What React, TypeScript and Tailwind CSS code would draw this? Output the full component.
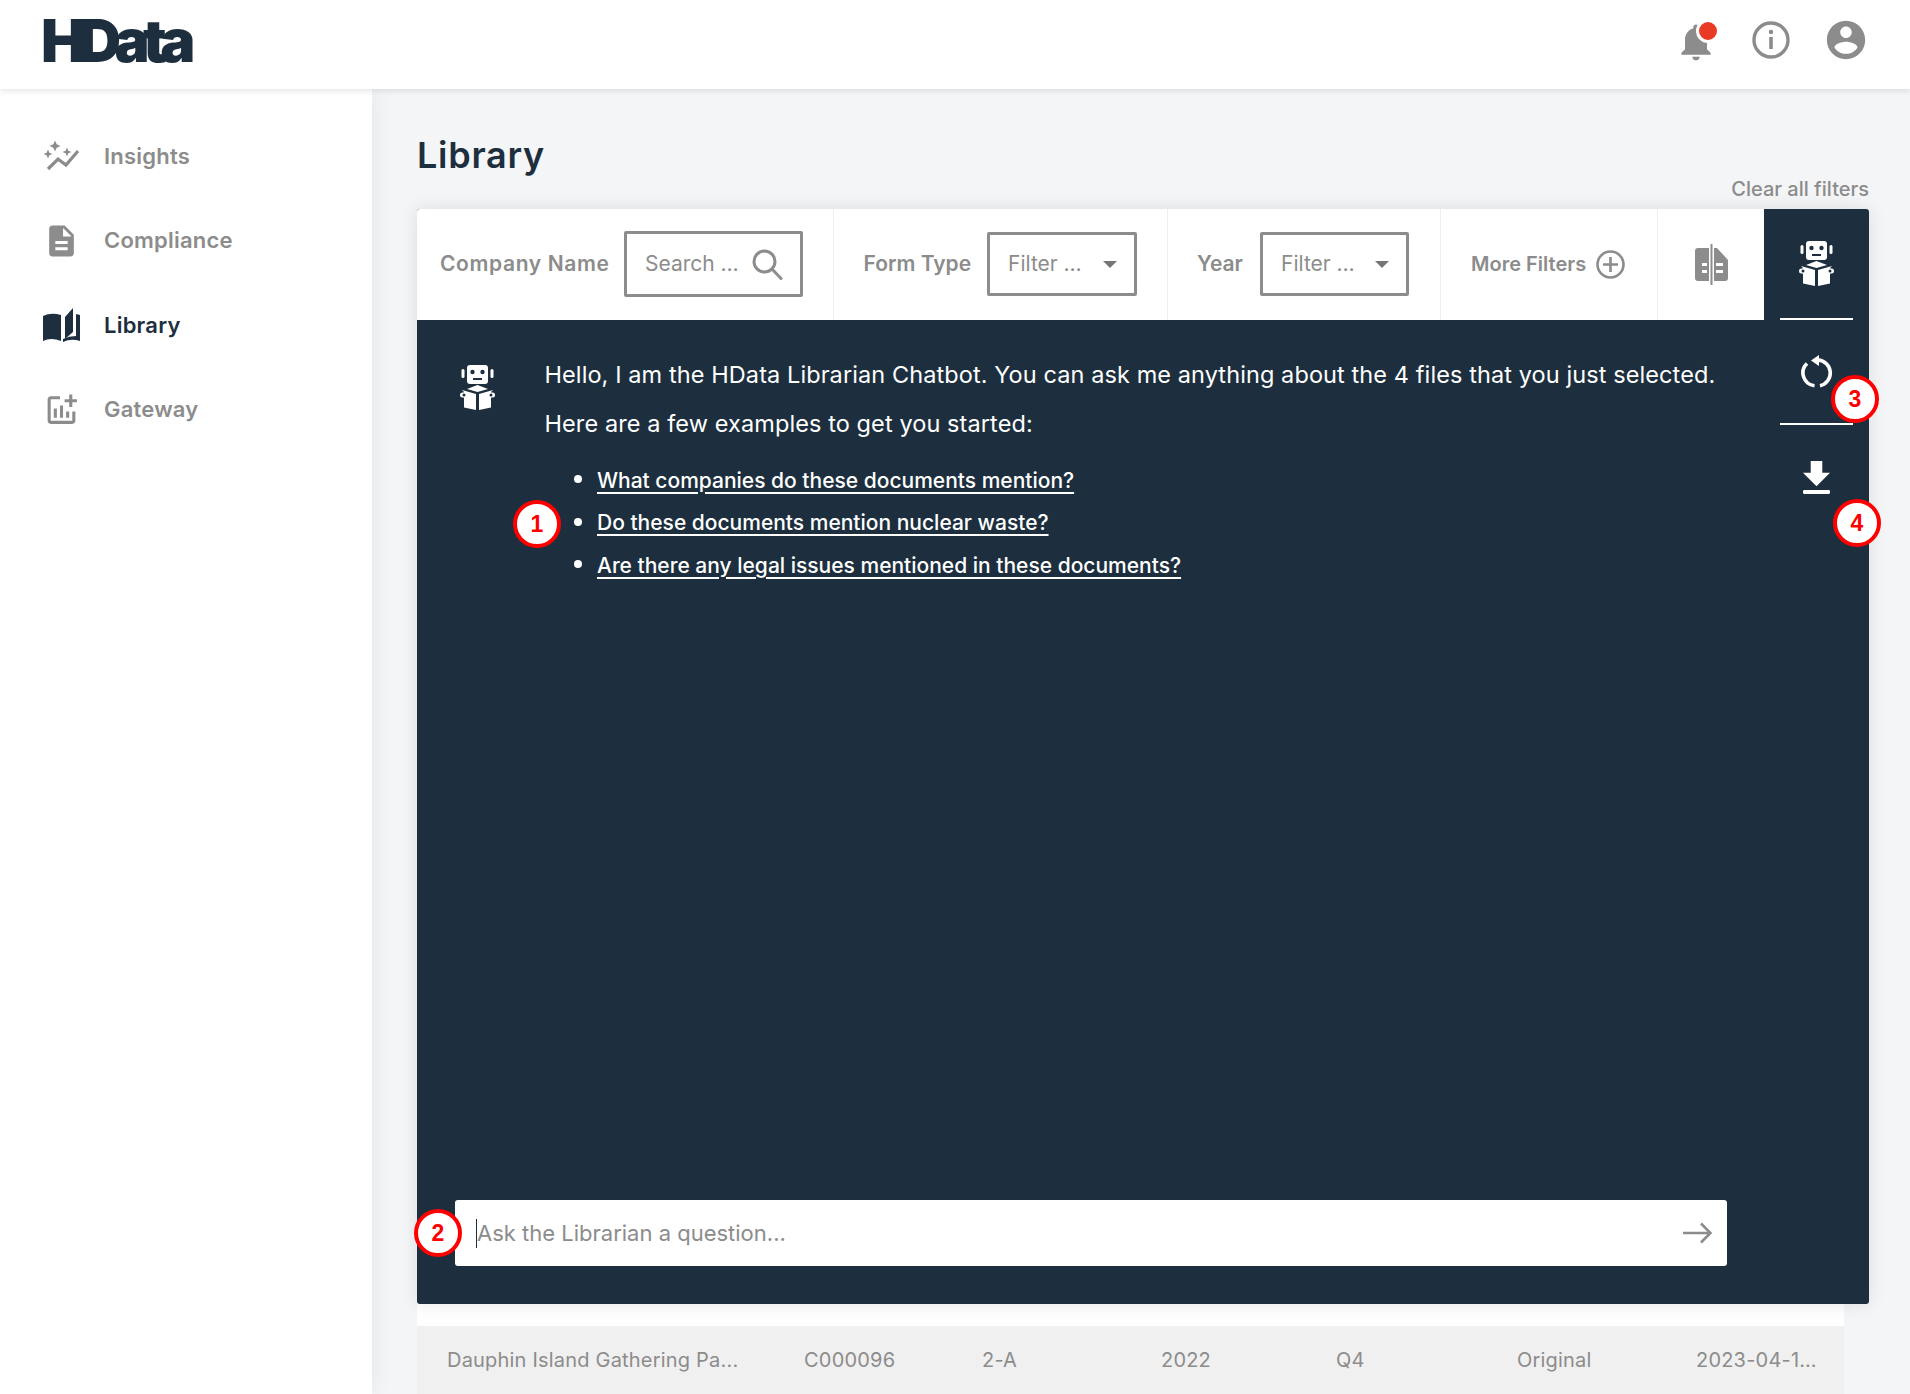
const font = { fontFamily: 'Inter, "Noto Sans", sans-serif' }

function Sparkle({ x, y, r }: { x: number; y: number; r: number }) {
  const k = r * 0.3
  return <path d={`M${x} ${y - r}L${x + k} ${y - k}L${x + r} ${y}L${x + k} ${y + k}L${x} ${y + r}L${x - k} ${y + k}L${x - r} ${y}L${x - k} ${y - k}Z`} />
}

function InsightsIcon() {
  return (
    <svg width="36" height="30" viewBox="0 0 36 30" fill="#8c8c8c">
      <Sparkle x={11} y={5} r={5.5} />
      <Sparkle x={23} y={11} r={4.5} />
      <Sparkle x={4} y={13} r={4.5} />
      <path d="M4 28l10-10 8 6 12-14" fill="none" stroke="#8c8c8c" strokeWidth="3.2" />
    </svg>
  )
}

function ComplianceIcon() {
  return (
    <svg width="44" height="44" viewBox="0 0 24 24" fill="#8c8c8c">
      <path d="M14 2H6c-1.1 0-1.99.9-1.99 2L4 20c0 1.1.89 2 1.99 2H18c1.1 0 2-.9 2-2V8l-6-6zm2 16H8v-2h8v2zm0-4H8v-2h8v2zm-3-5V3.5L18.5 9H13z" />
    </svg>
  )
}

function LibraryIcon() {
  return (
    <svg width="37" height="35" viewBox="0 0 37 35" fill="#1d2f3e">
      <path d="M0 8Q8 4 18 7V33Q8 29 0 33Z" />
      <path d="M22 9L30 0V24L22 31Z" />
      <path d="M20 34Q28 30 37 33V7L33 6V28Q26 28 20 31Z" />
    </svg>
  )
}

function GatewayIcon() {
  return (
    <svg width="38" height="38" viewBox="0 0 24 24" fill="#8c8c8c">
      <path d="M22 5v2h-3v3h-2V7h-3V5h3V2h2v3h3zm-3 14H5V5h6V3H5c-1.1 0-2 .9-2 2v14c0 1.1.9 2 2 2h14c1.1 0 2-.9 2-2v-6h-2v6zm-4-6v4h2v-4h-2zm-4 4h2V9h-2v8zm-2 0v-6H7v6h2z" />
    </svg>
  )
}

function RobotIcon() {
  return (
    <svg width="35" height="45" viewBox="0 0 35 45" fill="#fff">
      <rect x="7" y="0" width="21" height="19" rx="3" />
      <rect x="1.5" y="4" width="3" height="9" rx="1.5" />
      <rect x="30.5" y="4" width="3" height="9" rx="1.5" />
      <circle cx="12.5" cy="7" r="2.2" fill="#1d2f3e" />
      <circle cx="22.5" cy="7" r="2.2" fill="#1d2f3e" />
      <rect x="13" y="13" width="9" height="2" fill="#1d2f3e" />
      <path d="M7 24L17.5 20L28 24L17.5 27Z" />
      <path d="M2 25L16 29V45L4 42.5V33A3.5 3.5 0 0 1 4 27Z" />
      <path d="M33 25L19 29V45L31 42.5V33A3.5 3.5 0 0 0 31 27Z" />
      <circle cx="2.5" cy="30" r="2.5" />
      <circle cx="32.5" cy="30" r="2.5" />
      <circle cx="31" cy="30" r="1.5" fill="#1d2f3e" />
      <circle cx="4" cy="30" r="1.5" fill="#1d2f3e" />
    </svg>
  )
}

function Caret() {
  return (
    <svg width="14" height="7" viewBox="0 0 14 7" fill="#757575">
      <path d="M0 0h14L7 7z" />
    </svg>
  )
}

function Badge({ n, className }: { n: number; className: string }) {
  return (
    <div
      className={`absolute z-30 flex h-[48px] w-[48px] items-center justify-center rounded-full border-[4px] border-[#f00] bg-white text-[23px] font-bold text-[#f00] ${className}`}
      style={{ fontFamily: '"Liberation Sans", sans-serif' }}
    >
      {n}
    </div>
  )
}

function NavItem({ icon, label, active }: { icon: React.ReactNode; label: string; active?: boolean }) {
  return (
    <div className="flex h-[84.5px] items-center">
      <div className="flex w-[61px] shrink-0 items-center">
        <div className="flex w-[37px] justify-center">{icon}</div>
      </div>
      <span className={`text-[22px] font-semibold tracking-[0.01em] ${active ? 'text-[#1d2f3e]' : 'text-[#8c8c8c]'}`}>{label}</span>
    </div>
  )
}

function FilterBox({ className, text, children }: { className: string; text: string; children: React.ReactNode }) {
  return (
    <div className={`-mt-px flex items-center justify-between rounded-[2px] border-[3px] border-[#8c8c8c] ${className}`}>
      <span className="text-[21px] font-normal text-[#8c8c8c]">{text}</span>
      {children}
    </div>
  )
}

function Question({ text }: { text: string }) {
  return (
    <li className="flex h-[42.5px] items-center gap-[15px]">
      <span className="h-[8px] w-[8px] -translate-y-px rounded-full bg-white" />
      <span className="underline underline-offset-[4px]">{text}</span>
    </li>
  )
}

export default function App() {
  return (
    <div className="relative flex h-[1394px] w-[1910px] flex-col overflow-hidden bg-[#f4f5f7]" style={font}>
      {/* header */}
      <header className="relative z-20 flex h-[89px] shrink-0 items-center justify-between bg-white pb-[9px] pl-[41px] pr-[45px] shadow-[0_2px_6px_rgba(0,0,0,0.1)]">
        <div className="text-[59px] font-black leading-none tracking-[-6.7px] text-[#1d2f3e]">HData</div>
        <div className="flex items-center gap-[37px]">
          <div className="relative h-[38px] w-[38px]">
            <svg width="44" height="44" viewBox="0 0 24 24" fill="#8c8c8c" className="absolute -left-[3px] -top-[1px]">
              <path d="M12 22c1.1 0 2-.9 2-2h-4c0 1.1.89 2 2 2zm6-6v-5c0-3.07-1.64-5.64-4.5-6.32V4c0-.83-.67-1.5-1.5-1.5s-1.5.67-1.5 1.5v.68C7.63 5.36 6 7.92 6 11v5l-2 2v1h16v-1l-2-2z" />
            </svg>
            <div className="absolute left-[19px] top-[-2px] h-[24px] w-[24px] rounded-full border-[3px] border-white bg-[#e93a25]" />
          </div>
          <svg width="38" height="38" viewBox="0 0 38 38" fill="none">
            <circle cx="19" cy="19" r="17" stroke="#8c8c8c" strokeWidth="3.4" />
            <rect x="17.2" y="16" width="3.6" height="12" fill="#8c8c8c" />
            <circle cx="19" cy="11" r="2.2" fill="#8c8c8c" />
          </svg>
          <svg width="46" height="46" viewBox="0 0 24 24" fill="#8c8c8c" className="-mx-1">
            <path d="M12 2C6.48 2 2 6.48 2 12s4.48 10 10 10 10-4.48 10-10S17.52 2 12 2zm0 3c1.66 0 3 1.34 3 3s-1.34 3-3 3-3-1.34-3-3 1.34-3 3-3zm0 14.2c-2.5 0-4.71-1.28-6-3.22.03-1.99 4-3.08 6-3.08 1.99 0 5.97 1.09 6 3.08-1.29 1.94-3.5 3.22-6 3.22z" />
          </svg>
        </div>
      </header>

      <div className="flex min-h-0 flex-1">
        {/* sidebar */}
        <aside className="relative z-10 w-[372px] shrink-0 bg-white pl-[43px] pt-[25px] shadow-[0_0_22px_rgba(0,0,0,0.07)]">
          <NavItem icon={<InsightsIcon />} label="Insights" />
          <NavItem icon={<ComplianceIcon />} label="Compliance" />
          <NavItem icon={<LibraryIcon />} label="Library" active />
          <NavItem icon={<GatewayIcon />} label="Gateway" />
        </aside>

        {/* main */}
        <main className="min-w-0 flex-1 pl-[45px] pr-[41px]">
          <h1 className="mt-[44px] text-[36px] font-semibold leading-[44px] tracking-[0.02em] text-[#1d2f3e]">Library</h1>
          <div className="mb-[8px] text-right text-[20px] font-medium leading-[24px] text-[#8c8c8c]">Clear all filters</div>

          <div className="relative z-10 flex h-[1095px] overflow-hidden rounded-[3px] bg-[#1d2f3e] shadow-[0_0_18px_rgba(0,0,0,0.1)]">
            <div className="flex min-w-0 flex-1 flex-col">
              {/* filters */}
              <div className="flex h-[111px] shrink-0 items-center bg-white text-[21px] font-semibold text-[#8c8c8c]">
                <div className="flex h-full w-[417px] items-center gap-[15px] border-r border-[#eeeeee] pl-[23px]">
                  <span className="w-[169px] -translate-y-px whitespace-nowrap tracking-[0.03em]">Company Name</span>
                  <FilterBox className="h-[66px] w-[179px] pl-[18px] pr-[17px]" text="Search …">
                    <svg width="31" height="31" viewBox="0 0 31 31" fill="none" stroke="#8c8c8c" strokeWidth="3">
                      <circle cx="12.5" cy="12.5" r="10.5" />
                      <path d="M20 20l9 9.5" strokeLinecap="round" />
                    </svg>
                  </FilterBox>
                </div>
                <div className="flex h-full w-[334px] items-center gap-[15px] border-r border-[#eeeeee] pl-[29.5px]">
                  <span className="w-[108.5px] -translate-y-px whitespace-nowrap">Form Type</span>
                  <FilterBox className="h-[64px] w-[150px] pl-[18px] pr-[17px]" text="Filter …">
                    <Caret />
                  </FilterBox>
                </div>
                <div className="flex h-full w-[273px] items-center gap-[15px] border-r border-[#eeeeee] pl-[29px]">
                  <span className="w-[48px] -translate-y-px whitespace-nowrap">Year</span>
                  <FilterBox className="h-[64px] w-[149px] pl-[18px] pr-[17px]" text="Filter …">
                    <Caret />
                  </FilterBox>
                </div>
                <div className="flex h-full w-[217px] items-center gap-[10px] border-r border-[#eeeeee] pl-[30px]">
                  <span className="-translate-y-px whitespace-nowrap text-[20px]">More Filters</span>
                  <svg width="29" height="29" viewBox="0 0 29 29" fill="none" stroke="#8c8c8c" strokeWidth="2.6">
                    <circle cx="14.5" cy="14.5" r="13" />
                    <path d="M14.5 7v15M7 14.5h15" />
                  </svg>
                </div>
                <div className="flex h-full flex-1 items-center justify-center">
                  <svg width="35" height="41" viewBox="0 0 35 41" fill="#8c8c8c">
                    <path fillRule="evenodd" d="M15 4v33H4a3 3 0 0 1-3-3V7a3 3 0 0 1 3-3zM8 19v3h5v-3zM8 26v3h5v-3z" />
                    <rect x="16.5" y="0" width="2" height="41" />
                    <path fillRule="evenodd" d="M20 4h3l11 12v18a3 3 0 0 1-3 3H20zM22 19v3h7v-3zM22 26v3h7v-3z" />
                  </svg>
                </div>
              </div>

              {/* chat */}
              <div className="flex min-h-0 flex-1 flex-col justify-between pb-[38px] pl-[43px] pt-[30px]">
                <div className="flex gap-[49.5px] text-white">
                  <div className="mt-[15px] shrink-0">
                    <RobotIcon />
                  </div>
                  <div>
                    <p className="whitespace-nowrap text-[23.5px] leading-[49px] tracking-[0.004em]">Hello, I am the HData Librarian Chatbot. You can ask me anything about the 4 files that you just selected.</p>
                    <p className="text-[23.5px] leading-[49px] tracking-[0.004em]">Here are a few examples to get you started:</p>
                    <ul className="mt-[11px] pl-[29.5px] text-[21px] font-medium">
                      <Question text="What companies do these documents mention?" />
                      <Question text="Do these documents mention nuclear waste?" />
                      <Question text="Are there any legal issues mentioned in these documents?" />
                    </ul>
                  </div>
                </div>
                <div className="-ml-[5px] flex h-[66px] w-[1272px] items-center justify-between rounded-[3px] bg-white pl-[21px] pr-[15px]">
                  <div className="flex items-center">
                    <span className="h-[29px] w-px bg-[#1d2f3e]" />
                    <span className="text-[22px] text-[#8c8c8c]">Ask the Librarian a question...</span>
                  </div>
                  <svg width="29" height="22" viewBox="0 0 29 22" fill="none" stroke="#8c8c8c" strokeWidth="2.6">
                    <path d="M0 11h27M18 1.5l9.5 9.5-9.5 9.5" />
                  </svg>
                </div>
              </div>
            </div>

            {/* right rail */}
            <div className="flex w-[105px] shrink-0 flex-col items-center">
              <div className="flex h-[111px] w-[73px] items-center justify-center border-b-2 border-white">
                <RobotIcon />
              </div>
              <div className="flex h-[105px] w-[73px] items-center justify-center border-b-2 border-white">
                <svg width="32" height="34" viewBox="0 0 32 34" fill="none" stroke="#fff" strokeWidth="3.6">
                  <path d="M17 5a13 13 0 0 1 2 25.7" />
                  <path d="M13.5 30.8A13 13 0 0 1 6 8.5" />
                  <path d="M18 0v11l-8-5.5z" fill="#fff" stroke="none" />
                </svg>
              </div>
              <svg width="27" height="33" viewBox="5 3 14 17" fill="#fff" className="mt-[36px]">
                <path d="M15 3v6h4l-7 7-7-7h4V3zM5.6 18h12.8a.6.6 0 0 1 .6.6v.8a.6.6 0 0 1-.6.6H5.6a.6.6 0 0 1-.6-.6v-.8a.6.6 0 0 1 .6-.6z" />
              </svg>
            </div>
          </div>

          {/* table row peeking out below the panel */}
          <div className="mr-[25px] h-[22px] bg-white" />
          <div className="mr-[25px] grid h-[68px] grid-cols-[357px_178px_179px_175px_181px_179px_1fr] items-center bg-[#f0f0f0] pb-[1px] pl-[30px] text-[20px] tracking-[0.01em] text-[#8c8c8c]">
            <span>Dauphin Island Gathering Pa...</span>
            <span>C000096</span>
            <span>2-A</span>
            <span>2022</span>
            <span>Q4</span>
            <span>Original</span>
            <span>2023-04-1…</span>
          </div>
        </main>
      </div>

      <Badge n={1} className="left-[513px] top-[500px]" />
      <Badge n={2} className="left-[414px] top-[1209px]" />
      <Badge n={3} className="left-[1831px] top-[375px]" />
      <Badge n={4} className="left-[1833px] top-[499px]" />
    </div>
  )
}
